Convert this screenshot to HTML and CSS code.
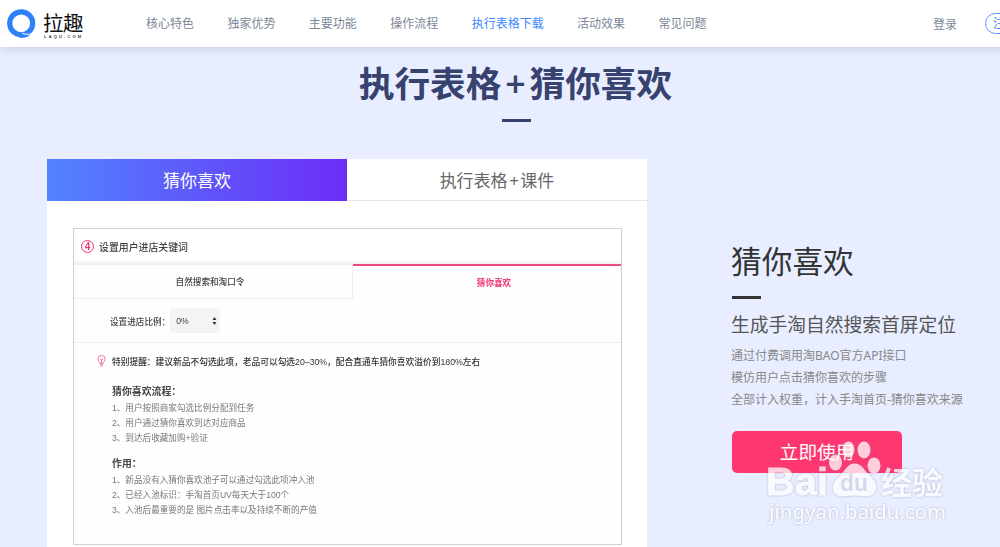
FILE: index.html
```html
<!DOCTYPE html>
<html lang="zh-CN">
<head>
<meta charset="utf-8">
<title>拉趣</title>
<link rel="stylesheet" href="styles.css">
</head>
<body>
<header class="topbar">
  <a class="logo">
    <svg class="logo-mark" viewBox="0 0 30 30" width="30" height="30">
      <circle cx="14.200" cy="14.300" r="11.500" fill="none" stroke="#2f80fb" stroke-width="5.200"/>
      <path d="M15 24.200c2 1 5 1.400 8.500.9l4-2.500" fill="none" stroke="#fff" stroke-width="1"/>
      <path d="M13 24.500c3 1.800 6.500 1.900 10.300.9-1.500 1.900-4 3-7 3.300-3 .2-4-.5-5-1z" fill="#2f80fb"/>
    </svg>
    <span class="logo-text"><span class="logo-name">拉趣</span><span class="logo-domain">LAQU.COM</span></span>
  </a>
  <nav class="nav">
    <a>核心特色</a><a>独家优势</a><a>主要功能</a><a>操作流程</a><a class="active">执行表格下载</a><a>活动效果</a><a>常见问题</a>
  </nav>
  <a class="login">登录</a>
  <a class="register">注册</a>
</header>
<main class="page">
  <h1 class="title">执行表格<span class="plus">+</span>猜你喜欢</h1>
  <div class="title-rule"></div>
  <div class="content">
    <section class="panel">
      <div class="tabs">
        <div class="tab tab-on">猜你喜欢</div>
        <div class="tab">执行表格<span class="tab-plus">+</span>课件</div>
      </div>
      <div class="shot">
        <div class="shot-head"><span class="num">4</span><span>设置用户进店关键词</span></div>
        <div class="shot-tabs">
          <div class="shot-tab"><span>自然搜索和淘口令</span></div>
          <div class="shot-tab shot-tab-on"><span>猜你喜欢</span></div>
        </div>
        <div class="ratio">
          <span>设置进店比例：</span>
          <span class="select">0%<svg width="5" height="8" viewBox="0 0 5 8"><path fill="#333" d="M2.500 0l2 3h-4zM2.500 8l-2-3h4z"/></svg></span>
        </div>
        <div class="notes">
          <div class="tip">
            <svg width="9" height="12" viewBox="0 0 9 12" fill="none" stroke="#f2618e"><path stroke-width=".9" d="M2.800 8.300C2.800 6.800.8 6 .8 3.900a3.700 3.500 0 0 1 7.400 0C8.200 6 6.200 6.800 6.200 8.300zM3 9.700h3M3.500 11.200h2M4.500 8V5M3 4l1.500 1L6 4"/></svg>
            <span>特别提醒：建议新品不勾选此项，老品可以勾选20–30%，配合直通车猜你喜欢溢价到180%左右</span>
          </div>
          <h4>猜你喜欢流程：</h4>
          <p>1、用户按照商家勾选比例分配到任务</p>
          <p>2、用户通过猜你喜欢到达对应商品</p>
          <p>3、到达后收藏加购+验证</p>
          <h4>作用：</h4>
          <p>1、新品没有入猜你喜欢池子可以通过勾选此项冲入池</p>
          <p>2、已经入池标识：手淘首页UV每天大于100个</p>
          <p>3、入池后最重要的是 图片点击率以及持续不断的产值</p>
        </div>
      </div>
    </section>
    <section class="intro">
      <h2>猜你喜欢</h2>
      <div class="intro-rule"></div>
      <h3>生成手淘自然搜索首屏定位</h3>
      <p>通过付费调用淘BAO官方API接口</p>
      <p>模仿用户点击猜你喜欢的步骤</p>
      <p>全部计入权重，计入手淘首页-猜你喜欢来源</p>
      <a class="cta">立即使用</a>
    </section>
  </div>
</main>
<svg class="watermark" width="190" height="94" viewBox="0 0 190 94">
  <g class="wm-shape" transform="translate(10.500 0)">
    <ellipse cx="70" cy="14.500" rx="6" ry="8"/>
    <ellipse cx="85.500" cy="15" rx="6.500" ry="8.500"/>
    <ellipse cx="57" cy="27.500" rx="6.500" ry="8"/>
    <ellipse cx="95.500" cy="30.500" rx="6.500" ry="8"/>
    <path d="M76 28.500c7 0 9.500 6 14.500 11.500 5.500 5 8 9 7 14-1.500 7.500-8 8-13 7-5-.8-11-.8-16 0-6 1-12.500.5-14-6.500-1-6 3-10 7.500-14.500 5-5 7-11.500 14-11.500z"/>
  </g>
  <g class="wm-brand">
    <text class="wm-bai" x="-2" y="60" font-size="39" textLength="62" lengthAdjust="spacingAndGlyphs">Bai</text>
    <text class="wm-du" x="72" y="56" font-size="24" textLength="28" lengthAdjust="spacingAndGlyphs">du</text>
    <text x="113" y="58.500" font-size="31" textLength="62" lengthAdjust="spacingAndGlyphs">经验</text>
  </g>
  <text class="wm-url" x="1" y="84" font-size="20" textLength="177" lengthAdjust="spacingAndGlyphs">jingyan.baidu.com</text>
</svg>
</body>
</html>
```
FILE: styles.css
```css
* { box-sizing: border-box; }
html, body { height: 100%; }
body {
  margin: 0;
  overflow: hidden;
  position: relative;
  background: #e8eeff;
  font-family: "Noto Sans", "Noto Sans CJK SC", sans-serif;
  color: #333;
}
h1, h2, h3, h4, p { margin: 0; font-weight: 400; }

.topbar {
  position: relative;
  display: flex;
  align-items: center;
  width: 1040px;
  height: 47px;
  padding-left: 7px;
  background: #fff;
  box-shadow: 0 1px 10px rgba(90, 120, 130, .28);
  font-size: 12px;
  color: #7b8797;
  white-space: nowrap;
}
.logo { display: flex; gap: 6px; width: 139px; }
.logo-text { display: flex; flex-direction: column; width: 42px; padding-top: 2px; }
.logo-name { font: 400 20.500px/22px "Noto Sans CJK SC", sans-serif; letter-spacing: -.6px; color: #111; }
.logo-domain { font: 700 4px/5px "Liberation Sans", sans-serif; letter-spacing: 2.200px; color: #444; padding: 1px 0 0 1px; }
.nav { display: flex; gap: 33.400px; width: 787px; line-height: 48px; }
.active { color: #3d86ff; }
.login { width: 52px; }
.register {
  width: 48px;
  height: 21px;
  padding-left: 7px;
  border: 1px solid #5a96ff;
  border-radius: 11px;
  line-height: 19px;
  color: #3d86ff;
}

.title {
  padding: 12px 0 0 31px;
  text-align: center;
  font-size: 35.700px;
  line-height: 49px;
  font-weight: 700;
  color: #37426f;
}
.plus { display: inline-block; width: 28px; font-weight: 600; }
.title-rule { width: 29px; height: 3px; margin: 11px 0 0 502px; background: #37426f; }

.content { display: flex; gap: 84px; padding: 37px 0 0 47px; }
.panel { width: 600px; height: 400px; background: #fff; }
.tabs { display: flex; height: 42px; }
.tab {
  flex: 1;
  border-bottom: 1px solid #e6e6e6;
  text-align: center;
  font-size: 17px;
  line-height: 44px;
  color: #666;
}
.tab-on { border: 0; color: #fff; background: linear-gradient(90deg, #5283fe, #6b2df7); }
.tab-plus { padding: 0 1.500px; }

.shot {
  width: 549px;
  height: 317px;
  margin: 27px 0 0 26px;
  border: 1px solid #d0d0d0;
  background: #fefefe;
  font-family: "Liberation Sans", "Noto Sans CJK SC", sans-serif;
  font-size: 8.600px;
  color: #444;
  white-space: nowrap;
}
.shot-head, .shot-tab span, .ratio, .notes { filter: blur(.4px); }
.shot-head {
  display: flex;
  align-items: center;
  gap: 5px;
  height: 35px;
  padding-left: 7px;
  background: linear-gradient(#fefffe 30px, #f1f1f1);
  font-size: 9.900px;
  font-weight: 500;
}
.num {
  width: 13px;
  height: 13px;
  border: 1px solid #ee356f;
  border-radius: 50%;
  text-align: center;
  font: 700 10px/11px "Liberation Sans", sans-serif;
  color: #ee356f;
}
.shot-tabs { display: flex; height: 35px; text-align: center; }
.shot-tab { width: 279px; padding-right: 6px; border: 1px solid #eee; border-left: 0; line-height: 34px; font-weight: 500; }
.shot-tab-on { flex: 1; padding: 0 0 0 14px; border: 0; border-top: 2px solid #ee4a7c; color: #ee356f; font-weight: 700; }
.ratio { display: flex; align-items: center; height: 44px; padding-left: 36px; border-bottom: 1px solid #eee; font-weight: 500; }
.select {
  display: flex;
  align-items: center;
  justify-content: space-between;
  width: 50px;
  height: 25px;
  padding: 0 3px 0 6px;
  border-radius: 3px;
  background: #f4f4f4;
}
.notes { padding: 9px 0 0 38px; line-height: 15px; }
.tip { display: flex; gap: 6px; height: 22px; margin-left: -15px; padding-top: 3px; font-size: 8.720px; font-weight: 500; color: #333; }
.notes h4 { font-size: 9.900px; line-height: 17px; margin: 9px 0 1px; font-weight: 700; }
.notes p { color: #777; height: 15px; }

.intro { width: 260px; padding-top: 78px; white-space: nowrap; }
.intro h2 { font-size: 30.700px; line-height: 48px; }
.intro-rule { width: 29px; height: 3px; margin: 11px 0 0 1px; background: #333; }
.intro h3 { margin: 12px 0 6px; font-size: 18.750px; line-height: 28px; color: #555; }
.intro p { font-size: 12px; line-height: 22px; color: #888; }
.cta {
  display: block;
  width: 170px;
  height: 42px;
  margin: 20px 0 0 1px;
  border-radius: 5px;
  background: #ff3771;
  text-align: center;
  font-size: 18.600px;
  line-height: 42px;
  color: #fff;
}

.watermark { position: absolute; left: 768px; top: 435px; overflow: visible; opacity: .75; filter: drop-shadow(0 0 1px rgba(100, 110, 140, .6)); }
.wm-shape, .wm-brand, .wm-url { fill: #fff; }
.wm-brand { font-family: "Liberation Sans", "Noto Sans CJK SC", sans-serif; font-weight: 700; }
.wm-bai { stroke: #fff; stroke-width: .8px; }
.wm-brand .wm-du { fill: #cfd4e4; }
.wm-url { font-family: "Noto Sans", sans-serif; font-weight: 500; }
```
